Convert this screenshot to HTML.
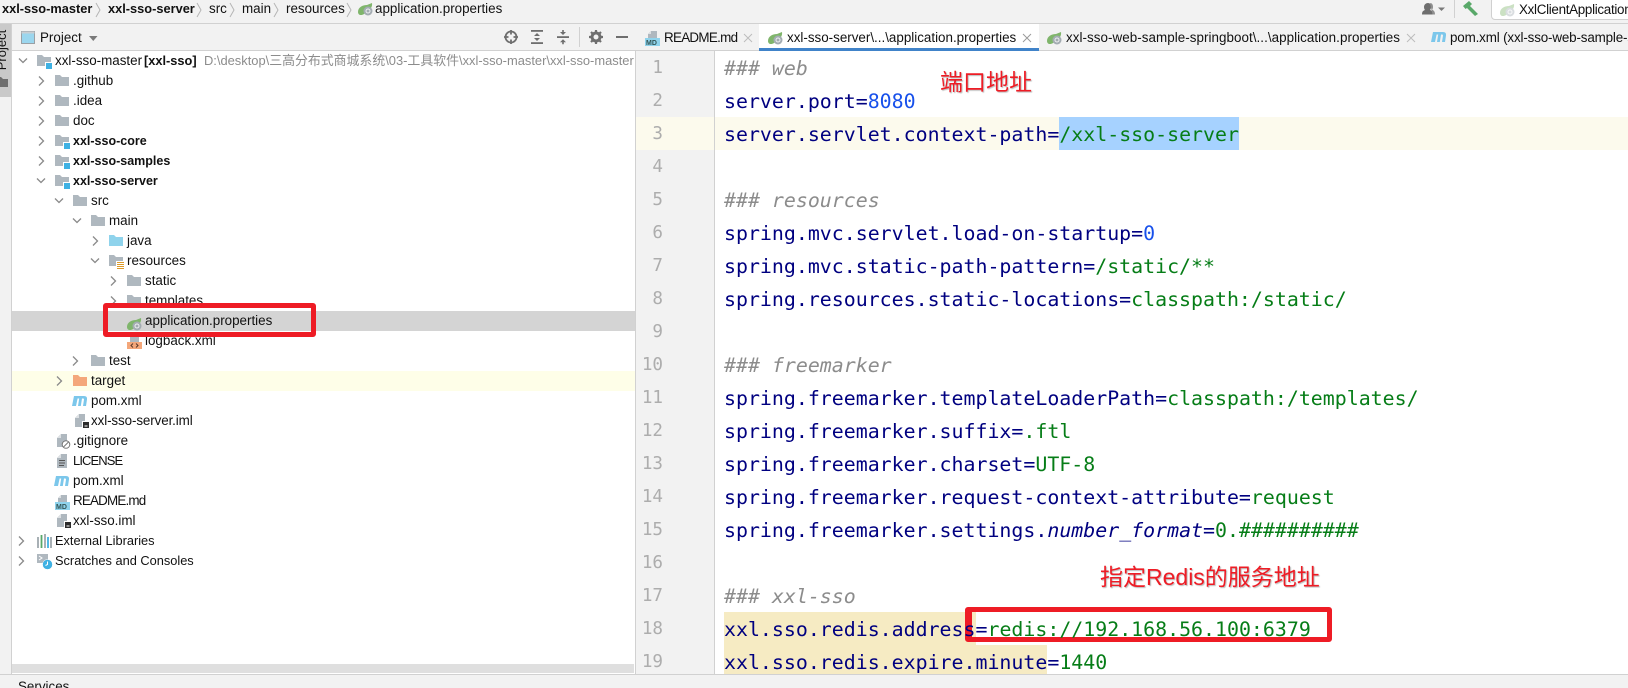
<!DOCTYPE html>
<html><head><meta charset="utf-8"><style>
html,body{margin:0;padding:0;background:#fff}
#p{position:relative;width:1628px;height:688px;overflow:hidden;background:#fff;font-family:"Liberation Sans","Noto Sans CJK SC",sans-serif;font-size:13.4px;color:#111}
#p>*{position:absolute}
.t{height:20px;line-height:20px;white-space:nowrap}
.b{font-weight:bold;font-size:12.8px}
.b2{font-weight:bold;font-size:12.5px}
.i{width:16px;height:16px;overflow:visible}
.c{font-family:"DejaVu Sans Mono",monospace;font-size:19.9px;line-height:33px;height:33px;white-space:pre;left:724px;color:#000080;margin-top:1px}
.g{color:#067d17}.n{color:#1750eb}.m{color:#8c8c8c;font-style:italic}
.l{font-family:"DejaVu Sans Mono",monospace;font-size:17.6px;line-height:33px;height:33px;width:40px;left:623px;text-align:right;color:#adadad;margin-top:1px}
.a{font-size:23px;line-height:28px;color:#ee1c25;white-space:nowrap;text-shadow:1px 1px 1px #bbb,-1px 0 0 #fff}
.box{border:5px solid #ee1c25;border-radius:3px;box-sizing:border-box}
</style></head><body><div id="p">
<svg width="0" height="0" style="position:absolute"><defs>
<g id="f"><path d="M0 3h5l2 2h7v9H0z" fill="#afb8bf"/></g>
<g id="fb"><path d="M0 3h5l2 2h7v9H0z" fill="#8fd3ec"/></g>
<g id="fo"><path d="M0 3h5l2 2h7v9H0z" fill="#f4a77a"/></g>
<g id="fm"><path d="M0 3h5l2 2h7v9H0z" fill="#afb8bf"/><rect x="8" y="10" width="8" height="8" fill="#fff"/><rect x="9" y="11" width="6" height="6" fill="#3fb1e3"/></g>
<g id="fr"><path d="M0 3h5l2 2h7v9H0z" fill="#afb8bf"/><rect x="7" y="9" width="9" height="9" fill="#fff"/><path d="M8 10.500h7M8 12.500h7M8 14.500h7M8 16.500h7" stroke="#dd9b2a" stroke-width="1"/></g>
<g id="s"><g transform="translate(0,5)"><path d="M0 9C0 4 5 2 9 2L14 0C14.500 3 13 6 11 7L6 11C3 13 0 12 0 9z" fill="#7fb56b"/><circle cx="10" cy="8" r="4.500" fill="#a3acb2"/><circle cx="10" cy="8" r="2" fill="none" stroke="#eef0f1" stroke-width="1"/></g></g>
<g id="mv"><path d="M0 14L2 4H12Q15.500 4 15 7.500L14 14H11L12 7.500Q12 6.500 11.200 6.500H10L8.800 14H6L7.200 6.500H5.600L4 14z" fill="#7cc7eb"/></g>
<g id="iml"><path d="M1 5L5 1H11V14H1z" fill="#afb8bf"/><path d="M5 1V5H1z" fill="#dde1e4"/><rect x="8" y="8" width="8" height="8" fill="#fff"/><rect x="9" y="9" width="6" height="6" fill="#2b2b2b"/><rect x="10.500" y="12.500" width="3" height="1" fill="#fff"/></g>
<g id="md"><path d="M3 7V3L6 0H12V7z" fill="#afb8bf"/><path d="M6 0V3H3z" fill="#dde1e4"/><rect y="7" width="15" height="8" fill="#8fd3ec"/><text x="1" y="14" font-size="7" font-weight="bold" fill="#355">MD</text></g>
<g id="ar"><path d="M2 2.500l4.500 4.500-4.500 4.500" fill="none" stroke="#8a8a8a" stroke-width="1.300"/></g>
<g id="dn"><path d="M2 4.500l4 4 4-4" fill="none" stroke="#8a8a8a" stroke-width="1.300"/></g>
<g id="x"><path d="M0 0l8 8M8 0l-8 8" fill="none" stroke-width="1"/></g>
</defs></svg>

<!-- top bar -->
<div style="left:0;top:0;width:1628px;height:23px;background:#f2f2f2;border-bottom:1px solid #d1d1d1"></div>
<div class="t b" style="left:2px;top:-1px">xxl-sso-master</div>
<div class="t b" style="left:108px;top:-1px">xxl-sso-server</div>
<div class="t" style="left:209px;top:-1px">src</div>
<div class="t" style="left:242px;top:-1px">main</div>
<div class="t" style="left:286px;top:-1px">resources</div>
<div class="t" style="left:375px;top:-1px">application.properties</div>
<svg class="i" style="left:358px;top:-2px"><use href="#s"/></svg>
<svg style="left:94px;top:0" width="270" height="23" fill="none" stroke="#b5b5b5"><path d="M2 3l4 7-4 7M103 3l4 7-4 7M136 3l4 7-4 7M180 3l4 7-4 7M253 3l4 7-4 7"/></svg>
<svg style="left:1420px;top:0" width="28" height="18"><path d="M8 3c2 0 3 1.500 3 4 0 1.500-.5 2.500-1 3 2 .8 3 1.500 3 4.500H2c0-3 1-3.700 3-4.500-.5-.5-1-1.500-1-3 0-2.500 2-4 4-4z" fill="#6e6e6e"/><path d="M10 3c2 0 3 1.500 3 4 0 1-.3 2-.8 2.800 1.500.6 2.800 1.700 2.800 4.700h-2.500" fill="#8f8f8f"/><path d="M18 7.500h7l-3.500 3.500z" fill="#7a7a7a"/></svg>
<div style="left:1454px;top:0;width:1px;height:18px;background:#d1d1d1"></div>
<svg style="left:1462px;top:0" width="18" height="17"><path d="M1 6L7 1l3 3-2 2 8 8-3 2-8-8-1.500 1z" fill="#59a869"/></svg>
<div style="left:1491px;top:-3px;width:150px;height:21px;background:#fff;border:1px solid #d0d0d0;border-radius:4px"></div>
<svg class="i" style="left:1500px;top:-1px;opacity:.4"><use href="#s"/></svg>
<div class="t" style="left:1519px;top:0;letter-spacing:-.3px">XxlClientApplication</div>

<!-- left strip -->
<div style="left:0;top:24px;width:11px;height:650px;background:#f2f2f2;border-right:1px solid #d1d1d1"></div>
<div style="left:0;top:24px;width:11px;height:73px;background:#c9c9c9"></div>
<div class="t" style="left:-24px;top:42px;width:52px;font-size:13px;transform:rotate(-90deg);text-align:center;line-height:16px;height:16px">Project</div>
<svg style="left:0;top:74px" width="11" height="16"><path d="M-3 3h4l2 2h5v8h-11z" fill="#6e6e6e"/></svg>

<!-- project header -->
<div style="left:12px;top:24px;width:623px;height:26px;background:#f2f2f2;border-bottom:1px solid #d1d1d1"></div>
<svg style="left:21px;top:31px" width="15" height="14"><rect x=".5" y=".5" width="13" height="12" fill="#9bd6ee" stroke="#9aa0a5"/><rect x=".5" y=".5" width="13" height="2" fill="#c9ced2"/></svg>
<div class="t" style="left:40px;top:28px">Project</div>
<svg style="left:89px;top:36px" width="9" height="6"><path d="M0 0h8.500L4.250 5z" fill="#7a7a7a"/></svg>
<svg style="left:503px;top:29px" width="70" height="18"><g fill="none" stroke="#6e6e6e" stroke-width="1.800"><circle cx="8" cy="8" r="5.500"/><path d="M8 1v4.500M8 10.500V15M1 8h4.500M10.500 8H15"/></g><g fill="#6e6e6e"><rect x="28" y="1" width="12" height="1.800"/><rect x="28" y="13.200" width="12" height="1.800"/><path d="M34 4l3 3h-6zM34 12l3-3h-6z"/><rect x="54" y="7.200" width="12" height="1.800"/><path d="M60 6l-3-3h2.200V1h1.600v2H63zM60 10.200l3 3h-2.200v2h-1.600v-2H57z"/></g></svg>
<div style="left:579px;top:27px;width:1px;height:20px;background:#d1d1d1"></div>
<svg style="left:588px;top:29px" width="16" height="16"><circle cx="8" cy="8" r="4" fill="none" stroke="#6e6e6e" stroke-width="3"/><path d="M8 1v3M8 12v3M1 8h3M12 8h3M3 3l2 2M11 11l2 2M13 3l-2 2M5 11l-2 2" stroke="#6e6e6e" stroke-width="2.200"/></svg>
<div style="left:616px;top:36px;width:12px;height:2px;background:#6e6e6e"></div>

<!-- tree highlights -->
<div style="left:12px;top:311px;width:623px;height:20px;background:#d4d4d4"></div>
<div style="left:12px;top:371px;width:623px;height:20px;background:#fefee8"></div>

<!-- tree -->
<svg class="i" style="left:17px;top:54px"><use href="#dn"/></svg>
<svg class="i" style="left:37px;top:52px"><use href="#fm"/></svg>
<div class="t" style="left:55px;top:51px">xxl-sso-master</div><div class="t b" style="left:144px;top:51px">[xxl-sso]</div>
<div class="t" style="left:204px;top:51px;width:431px;overflow:hidden;color:#8c8c8c;font-size:12.9px">D:\desktop\三高分布式商城系统\03-工具软件\xxl-sso-master\xxl-sso-master</div>

<svg class="i" style="left:37px;top:74px"><use href="#ar"/></svg><svg class="i" style="left:55px;top:72px"><use href="#f"/></svg><div class="t" style="left:73px;top:71px">.github</div>
<svg class="i" style="left:37px;top:94px"><use href="#ar"/></svg><svg class="i" style="left:55px;top:92px"><use href="#f"/></svg><div class="t" style="left:73px;top:91px">.idea</div>
<svg class="i" style="left:37px;top:114px"><use href="#ar"/></svg><svg class="i" style="left:55px;top:112px"><use href="#f"/></svg><div class="t" style="left:73px;top:111px">doc</div>
<svg class="i" style="left:37px;top:134px"><use href="#ar"/></svg><svg class="i" style="left:55px;top:132px"><use href="#fm"/></svg><div class="t b2" style="left:73px;top:131px">xxl-sso-core</div>
<svg class="i" style="left:37px;top:154px"><use href="#ar"/></svg><svg class="i" style="left:55px;top:152px"><use href="#fm"/></svg><div class="t b2" style="left:73px;top:151px">xxl-sso-samples</div>
<svg class="i" style="left:35px;top:174px"><use href="#dn"/></svg><svg class="i" style="left:55px;top:172px"><use href="#fm"/></svg><div class="t b2" style="left:73px;top:171px">xxl-sso-server</div>
<svg class="i" style="left:53px;top:194px"><use href="#dn"/></svg><svg class="i" style="left:73px;top:192px"><use href="#f"/></svg><div class="t" style="left:91px;top:191px">src</div>
<svg class="i" style="left:71px;top:214px"><use href="#dn"/></svg><svg class="i" style="left:91px;top:212px"><use href="#f"/></svg><div class="t" style="left:109px;top:211px">main</div>
<svg class="i" style="left:91px;top:234px"><use href="#ar"/></svg><svg class="i" style="left:109px;top:232px"><use href="#fb"/></svg><div class="t" style="left:127px;top:231px">java</div>
<svg class="i" style="left:89px;top:254px"><use href="#dn"/></svg><svg class="i" style="left:109px;top:252px"><use href="#fr"/></svg><div class="t" style="left:127px;top:251px">resources</div>
<svg class="i" style="left:109px;top:274px"><use href="#ar"/></svg><svg class="i" style="left:127px;top:272px"><use href="#f"/></svg><div class="t" style="left:145px;top:271px">static</div>
<svg class="i" style="left:109px;top:294px"><use href="#ar"/></svg><svg class="i" style="left:127px;top:292px"><use href="#f"/></svg><div class="t" style="left:145px;top:291px">templates</div>
<svg class="i" style="left:127px;top:313px"><use href="#s"/></svg><div class="t" style="left:145px;top:311px">application.properties</div>
<svg style="left:127px;top:335px" width="16" height="16"><path d="M3 7V1h9v6z" fill="#afb8bf"/><rect y="7" width="15" height="7" fill="#f4a77a"/><path d="M6 8.500l-2 2 2 2M9 8.500l2 2-2 2" fill="none" stroke="#5a3a2a"/></svg><div class="t" style="left:145px;top:331px">logback.xml</div>
<svg class="i" style="left:71px;top:354px"><use href="#ar"/></svg><svg class="i" style="left:91px;top:352px"><use href="#f"/></svg><div class="t" style="left:109px;top:351px">test</div>
<svg class="i" style="left:55px;top:374px"><use href="#ar"/></svg><svg class="i" style="left:73px;top:372px"><use href="#fo"/></svg><div class="t" style="left:91px;top:371px">target</div>
<svg class="i" style="left:72px;top:392px"><use href="#mv"/></svg><div class="t" style="left:91px;top:391px">pom.xml</div>
<svg class="i" style="left:74px;top:413px"><use href="#iml"/></svg><div class="t" style="left:91px;top:411px;letter-spacing:-.1px">xxl-sso-server.iml</div>
<svg class="i" style="left:56px;top:433px"><path d="M1 5L5 1H11V14H1z" fill="#afb8bf"/><path d="M5 1V5H1z" fill="#dde1e4"/><circle cx="10" cy="11.500" r="3.800" fill="#fff" stroke="#777"/><path d="M7.500 14l5-5" stroke="#777"/></svg><div class="t" style="left:73px;top:431px">.gitignore</div>
<svg class="i" style="left:56px;top:453px"><path d="M1 5L5 1H11V15H1z" fill="#afb8bf"/><path d="M5 1V5H1z" fill="#dde1e4"/><path d="M3 7.500h6M3 10h6M3 12.500h5" stroke="#555"/></svg><div class="t" style="left:73px;top:451px;font-size:13px;letter-spacing:-.9px">LICENSE</div>
<svg class="i" style="left:54px;top:472px"><use href="#mv"/></svg><div class="t" style="left:73px;top:471px">pom.xml</div>
<svg class="i" style="left:55px;top:495px"><use href="#md"/></svg><div class="t" style="left:73px;top:491px;letter-spacing:-.8px">README.md</div>
<svg class="i" style="left:56px;top:513px"><use href="#iml"/></svg><div class="t" style="left:73px;top:511px">xxl-sso.iml</div>
<svg class="i" style="left:17px;top:534px"><use href="#ar"/></svg>
<svg class="i" style="left:37px;top:533px"><path d="M1 4v11M14 4v11" fill="none" stroke="#9ea7ad" stroke-width="1.800"/><path d="M4.500 2v13" stroke="#59a869" stroke-width="1.800"/><path d="M8 1v14" stroke="#9ea7ad" stroke-width="1.800"/><path d="M11 4v11" stroke="#3fb1e3" stroke-width="1.800"/></svg>
<div class="t" style="left:55px;top:531px;font-size:12.8px">External Libraries</div>
<svg class="i" style="left:17px;top:554px"><use href="#ar"/></svg>
<svg class="i" style="left:37px;top:553px"><path d="M0 1h11v9H0z" fill="#afb8bf"/><path d="M2 3l3 2-3 2" fill="none" stroke="#fff"/><circle cx="10.500" cy="11.500" r="5" fill="#3fb1e3" stroke="#fff" stroke-width=".5"/><path d="M10.500 8.500v3l-2 1" fill="none" stroke="#fff"/></svg>
<div class="t" style="left:55px;top:551px;font-size:12.8px">Scratches and Consoles</div>

<!-- tree bottom -->
<div style="left:12px;top:664px;width:622px;height:9px;background:#dfdfdf"></div>
<div style="left:0;top:674px;width:1628px;height:14px;background:#f2f2f2;border-top:1px solid #d1d1d1;box-sizing:border-box"></div>
<div class="t" style="left:18px;top:677px">Services</div>

<!-- tabs -->
<div style="left:635px;top:24px;width:993px;height:26px;background:#f2f2f2;border-bottom:1px solid #d1d1d1"></div>
<div style="left:759px;top:24px;width:280px;height:24px;background:#fff"></div>
<div style="left:759px;top:48px;width:280px;height:3px;background:#4083c9"></div>
<svg class="i" style="left:645px;top:31px"><use href="#md"/></svg>
<div class="t" style="left:664px;top:28px;letter-spacing:-.7px">README.md</div>
<svg class="i" style="left:744px;top:34px;stroke:#bdbdbd"><use href="#x"/></svg>
<svg class="i" style="left:768px;top:27px"><use href="#s"/></svg>
<div class="t" style="left:787px;top:28px">xxl-sso-server\...\application.properties</div>
<svg class="i" style="left:1023px;top:34px;stroke:#9a9a9a"><use href="#x"/></svg>
<svg class="i" style="left:1047px;top:27px"><use href="#s"/></svg>
<div class="t" style="left:1066px;top:28px;letter-spacing:.05px">xxl-sso-web-sample-springboot\...\application.properties</div>
<svg class="i" style="left:1407px;top:34px;stroke:#bdbdbd"><use href="#x"/></svg>
<svg class="i" style="left:1431px;top:28px"><use href="#mv"/></svg>
<div class="t" style="left:1450px;top:28px;letter-spacing:-.15px">pom.xml (xxl-sso-web-sample-springboot)</div>

<!-- gutter -->
<div style="left:635px;top:51px;width:80px;height:623px;background:#f2f2f2;border-left:1px solid #d1d1d1;border-right:1px solid #d1d1d1;box-sizing:border-box"></div>
<div style="left:636px;top:117px;width:78px;height:33px;background:#fcfaed"></div>
<div style="left:715px;top:117px;width:913px;height:33px;background:#fcfaed"></div>
<div style="left:1059px;top:117px;width:180px;height:33px;background:#a6d2ff"></div>
<div style="left:724px;top:612px;width:252px;height:33px;background:#f6ebc3"></div>
<div style="left:724px;top:645px;width:323px;height:29px;background:#f6ebc3"></div>
<div class="box" style="left:965px;top:607px;width:367px;height:35px;border-left-width:7px"></div>

<div class="l" style="top:51px">1</div><div class="l" style="top:84px">2</div><div class="l" style="top:117px">3</div><div class="l" style="top:150px">4</div><div class="l" style="top:183px">5</div><div class="l" style="top:216px">6</div><div class="l" style="top:249px">7</div><div class="l" style="top:282px">8</div><div class="l" style="top:315px">9</div><div class="l" style="top:348px">10</div><div class="l" style="top:381px">11</div><div class="l" style="top:414px">12</div><div class="l" style="top:447px">13</div><div class="l" style="top:480px">14</div><div class="l" style="top:513px">15</div><div class="l" style="top:546px">16</div><div class="l" style="top:579px">17</div><div class="l" style="top:612px">18</div><div class="l" style="top:645px;height:28px;overflow:hidden">19</div>

<div class="c m" style="top:51px;color:#8c8c8c">### web</div>
<div class="c" style="top:84px">server.port=<span class="n">8080</span></div>
<div class="c" style="top:117px">server.servlet.context-path=<span class="g">/xxl-sso-server</span></div>
<div class="c m" style="top:183px;color:#8c8c8c">### resources</div>
<div class="c" style="top:216px">spring.mvc.servlet.load-on-startup=<span class="n">0</span></div>
<div class="c" style="top:249px">spring.mvc.static-path-pattern=<span class="g">/static/**</span></div>
<div class="c" style="top:282px">spring.resources.static-locations=<span class="g">classpath:/static/</span></div>
<div class="c m" style="top:348px;color:#8c8c8c">### freemarker</div>
<div class="c" style="top:381px">spring.freemarker.templateLoaderPath=<span class="g">classpath:/templates/</span></div>
<div class="c" style="top:414px">spring.freemarker.suffix=<span class="g">.ftl</span></div>
<div class="c" style="top:447px">spring.freemarker.charset=<span class="g">UTF-8</span></div>
<div class="c" style="top:480px">spring.freemarker.request-context-attribute=<span class="g">request</span></div>
<div class="c" style="top:513px">spring.freemarker.settings.<i>number_format</i>=<span class="g">0.##########</span></div>
<div class="c m" style="top:579px;color:#8c8c8c">### xxl-sso</div>
<div class="c" style="top:612px">xxl.sso.redis.address=<span class="g">redis://192.168.56.100:6379</span></div>
<div class="c" style="top:645px;height:28px;overflow:hidden">xxl.sso.redis.expire.minute=<span class="g">1440</span></div>

<!-- annotations -->
<div class="box" style="left:103px;top:303px;width:213px;height:34px"></div>
<div class="a" style="left:940px;top:68px">端口地址</div>
<div class="a" style="left:1100px;top:563px">指定Redis的服务地址</div>
</div></body></html>
